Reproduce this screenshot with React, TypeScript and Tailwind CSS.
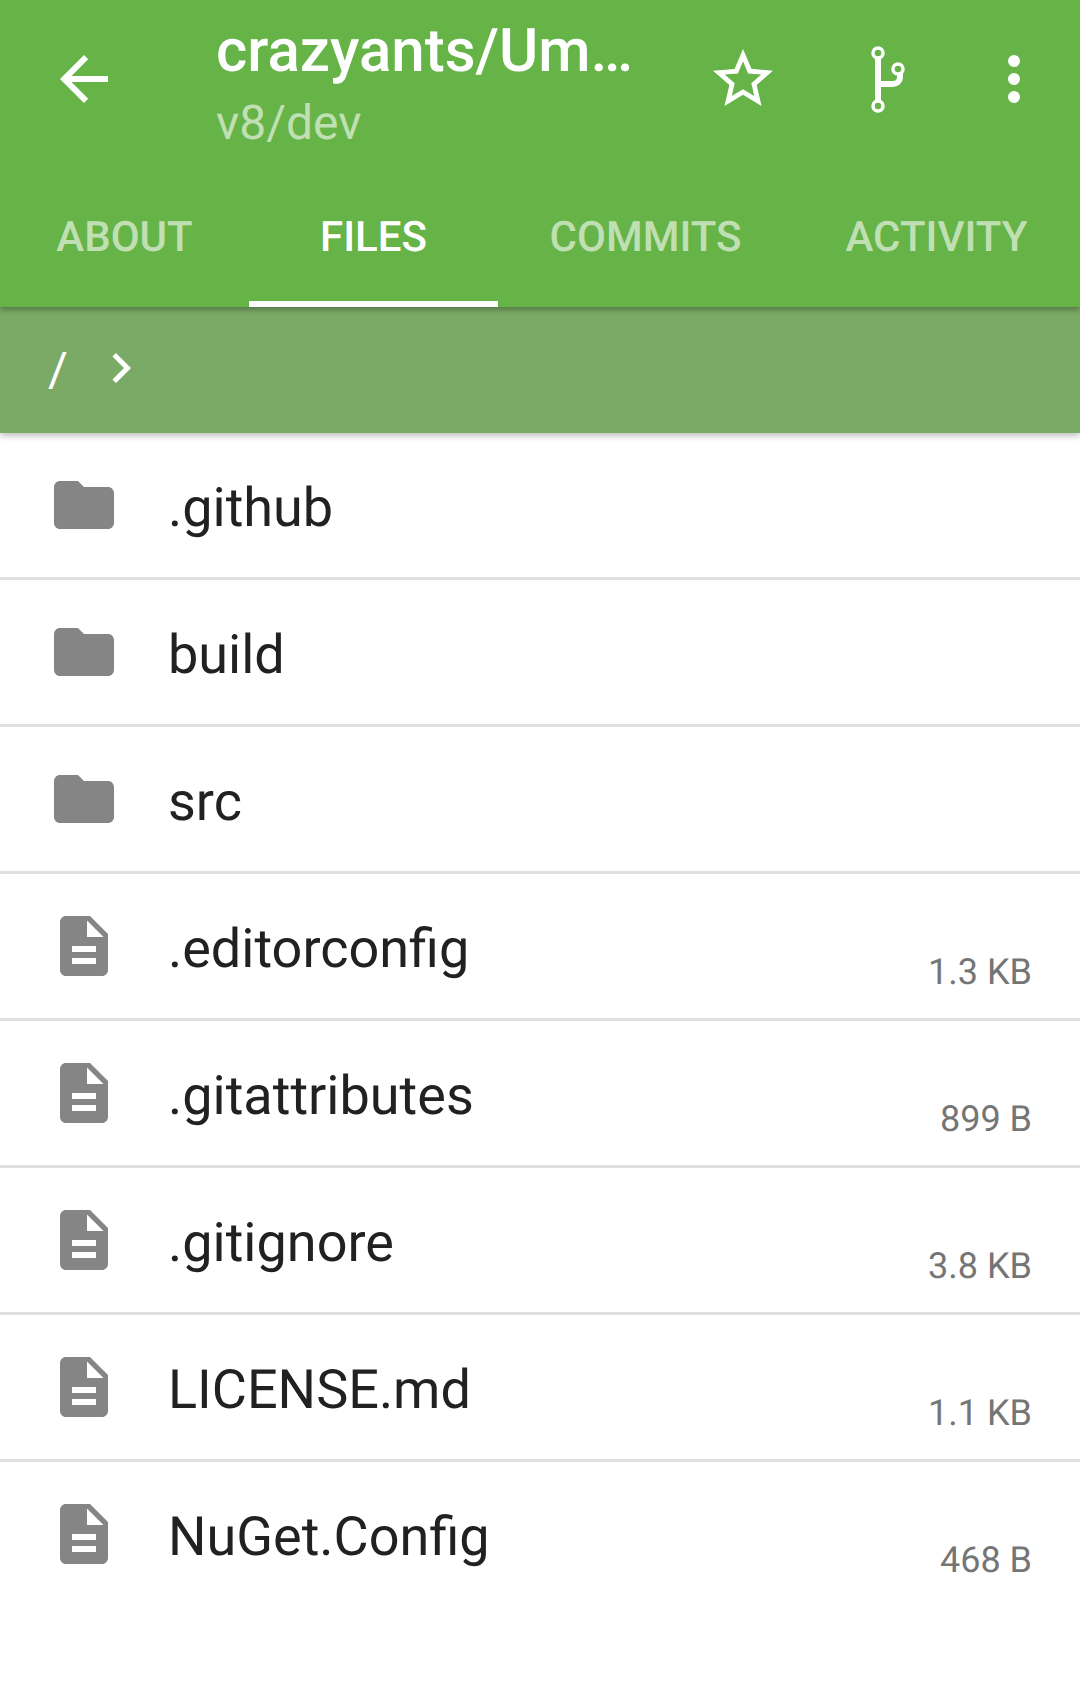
const tabs = [
  { label: 'ABOUT', width: 'w-[249px]', active: false },
  { label: 'FILES', width: 'w-[249px]', active: true },
  { label: 'COMMITS', width: 'w-[295px]', active: false },
  { label: 'ACTIVITY', width: 'w-[287px]', active: false },
]

const files = [
  { name: '.github', folder: true },
  { name: 'build', folder: true },
  { name: 'src', folder: true },
  { name: '.editorconfig', size: '1.3 KB' },
  { name: '.gitattributes', size: '899 B' },
  { name: '.gitignore', size: '3.8 KB' },
  { name: 'LICENSE.md', size: '1.1 KB' },
  { name: 'NuGet.Config', size: '468 B' },
]

function FolderIcon() {
  return (
    <svg viewBox="0 0 24 24" className="w-[72px] h-[72px] fill-[#858585] shrink-0">
      <path d="M10 4H4c-1.1 0-1.99.9-1.99 2L2 18c0 1.1.9 2 2 2h16c1.1 0 2-.9 2-2V8c0-1.1-.9-2-2-2h-8l-2-2z" />
    </svg>
  )
}

function FileIcon() {
  return (
    <svg viewBox="0 0 24 24" className="w-[72px] h-[72px] fill-[#858585] shrink-0">
      <path d="M14 2H6c-1.1 0-2 .9-2 2v16c0 1.1.9 2 2 2h12c1.1 0 2-.9 2-2V8l-6-6zm2 16H8v-2h8v2zm0-4H8v-2h8v2zm-3-5V3.5L18.5 9H13z" />
    </svg>
  )
}

function ForkIcon() {
  return (
    <svg viewBox="0 0 100 100" className="w-[100px] h-[100px] fill-none stroke-white">
      <path d="M38 28V70" strokeWidth="6" />
      <path d="M38 54H53C57 54 60 51 60 47V44" strokeWidth="6" />
      <circle cx="38" cy="23" r="5" strokeWidth="3.5" />
      <circle cx="38" cy="76" r="5" strokeWidth="3.5" />
      <circle cx="58" cy="39" r="5" strokeWidth="3.5" />
    </svg>
  )
}

export default function App() {
  return (
    <div className="w-[1080px] min-h-[1699px] bg-white font-['Roboto',sans-serif] [text-rendering:geometricPrecision] overflow-hidden">
      <header className="relative z-20 bg-[#66b447] h-[307px] shadow-[0_3px_6px_rgba(0,0,0,0.3)]">
        <div className="flex h-[163px]">
          <div className="w-[216px] pl-[48px] pt-[43px] shrink-0">
            <svg viewBox="0 0 24 24" className="w-[72px] h-[72px] fill-white">
              <path d="M20 11H7.83l5.59-5.59L12 4l-8 8 8 8 1.41-1.41L7.83 13H20v-2z" />
            </svg>
          </div>
          <div className="w-[420px] shrink-0">
            <div className="text-[60px] leading-[72px] mt-[15px] font-medium text-white whitespace-nowrap">crazyants/Um…</div>
            <div className="text-[48px] leading-[50px] mt-[11px] text-white/60">v8/dev</div>
          </div>
          <div className="w-[72px] ml-[71px] pt-[43px] shrink-0">
            <svg viewBox="0 0 24 24" className="w-[72px] h-[72px] fill-white">
              <path d="M22 9.24l-7.19-.62L12 2 9.19 8.63 2 9.24l5.46 4.73L5.82 21 12 17.27 18.18 21l-1.63-7.03L22 9.24zM12 15.4l-3.76 2.27 1-4.28-3.32-2.88 4.38-.38L12 6.1l1.71 4.04 4.38.38-3.32 2.88 1 4.28L12 15.4z" />
            </svg>
          </div>
          <div className="w-[100px] ml-[61px] pt-[30px] shrink-0">
            <ForkIcon />
          </div>
          <div className="ml-[68px] pt-[55px] flex flex-col gap-[6px] shrink-0">
            <span className="w-[12px] h-[12px] rounded-full bg-white" />
            <span className="w-[12px] h-[12px] rounded-full bg-white" />
            <span className="w-[12px] h-[12px] rounded-full bg-white" />
          </div>
        </div>
        <div className="flex h-[144px]">
          {tabs.map((t) => (
            <div
              key={t.label}
              className={`${t.width} flex items-center justify-center pt-[10px] text-[42px] font-medium border-b-[6px] ${
                t.active ? 'text-white border-white' : 'text-white/60 border-transparent'
              }`}
            >
              {t.label}
            </div>
          ))}
        </div>
      </header>

      <div className="relative z-10 bg-[#7baa66] h-[126px] flex items-center shadow-[0_3px_6px_rgba(0,0,0,0.25)]">
        <span className="ml-[48px] text-[48px] text-white">/</span>
        <svg viewBox="0 0 24 24" className="w-[60px] h-[60px] ml-[23px] mb-[4px] fill-white">
          <path d="M10 6L8.59 7.41 13.17 12l-4.58 4.59L10 18l6-6z" />
        </svg>
      </div>

      <div>
        {files.map((f, i) => (
          <div
            key={f.name}
            className={`flex items-center h-[147px] pl-[48px] pr-[48px] border-b-[3px] ${
              i < files.length - 1 ? 'border-[#e0e0e0]' : 'border-transparent'
            }`}
          >
            {f.folder ? <FolderIcon /> : <FileIcon />}
            <span className="ml-[48px] pt-[7px] text-[54px] text-[#212121] flex-1">{f.name}</span>
            {f.size && <span className="self-end mb-[19px] text-[36px] text-[#757575]">{f.size}</span>}
          </div>
        ))}
      </div>
    </div>
  )
}
